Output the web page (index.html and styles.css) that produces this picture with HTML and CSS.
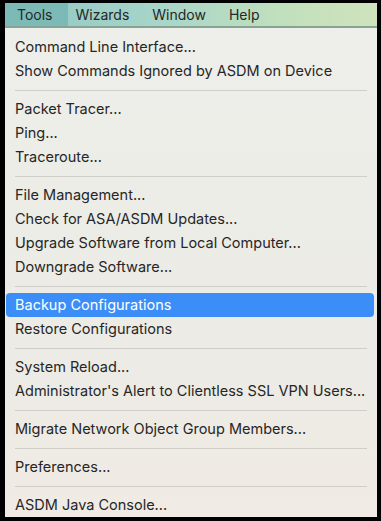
FILE: index.html
```html
<!DOCTYPE html>
<html lang="en">
<head>
  <meta charset="UTF-8" />
  <meta name="viewport" content="width=device-width, initial-scale=1.0"/>
  <title>ASDM Tools Menu</title>
  <link rel="stylesheet" href="styles.css">
</head>
<body>
  <div class="screen">
    <div class="menubar">
      <span class="menubar-item active">Tools</span>
      <span class="menubar-item">Wizards</span>
      <span class="menubar-item">Window</span>
      <span class="menubar-item">Help</span>
    </div>
    <ul class="menu">
      <li class="menu-item">Command Line Interface...</li>
      <li class="menu-item">Show Commands Ignored by ASDM on Device</li>
      <li class="separator"></li>
      <li class="menu-item">Packet Tracer...</li>
      <li class="menu-item">Ping...</li>
      <li class="menu-item">Traceroute...</li>
      <li class="separator"></li>
      <li class="menu-item">File Management...</li>
      <li class="menu-item">Check for ASA/ASDM Updates...</li>
      <li class="menu-item">Upgrade Software from Local Computer...</li>
      <li class="menu-item">Downgrade Software...</li>
      <li class="separator"></li>
      <li class="menu-item selected">Backup Configurations</li>
      <li class="menu-item">Restore Configurations</li>
      <li class="separator"></li>
      <li class="menu-item">System Reload...</li>
      <li class="menu-item">Administrator's Alert to Clientless SSL VPN Users...</li>
      <li class="separator"></li>
      <li class="menu-item">Migrate Network Object Group Members...</li>
      <li class="separator"></li>
      <li class="menu-item">Preferences...</li>
      <li class="separator"></li>
      <li class="menu-item">ASDM Java Console...</li>
    </ul>
  </div>
</body>
</html>
```

FILE: styles.css
```css
body {
  margin: 0;
  padding: 0;
  background-color: #000;
  font-family: Inter, "Liberation Sans", Arial, sans-serif;
  font-size: 14px;
  color: #262626;
}
.screen {
  width: 372px;
  margin: 3px 0 0 5px;
}
.menubar {
  display: flex;
  height: 23px;
  align-items: center;
  background: linear-gradient(to right, #8ec6c3 0%, #a6d5c9 40%, #c2e0bc 75%, #cfe3bd 100%);
  border-bottom: 2px solid #86a394;
}
.menubar-item {
  height: 100%;
  display: flex;
  align-items: center;
  padding: 0 11.5px;
}
.menubar-item.active {
  background-color: #7cbab7;
  padding: 0 15px 0 12px;
  margin-right: -3.5px;
}
.menu {
  list-style: none;
  margin: 0;
  padding: 7px 0 0 0;
  height: 482px;
  background: linear-gradient(to bottom, #eeefea 0%, #ecebe6 60%, #f0ebe4 100%);
}
.menu-item {
  height: 24px;
  line-height: 24px;
  padding-left: 9px;
  margin: 0 3px 0 1px;
  border-radius: 4px;
  font-size: 14.5px;
  white-space: nowrap;
}
.menu-item.selected {
  background-color: #3b8ef8;
  color: #fff;
}
.separator {
  height: 14px;
  display: flex;
  align-items: center;
  margin: 0 10px;
}
.separator::before {
  content: "";
  flex: 1;
  height: 1px;
  background-color: #d0cec9;
}
```
